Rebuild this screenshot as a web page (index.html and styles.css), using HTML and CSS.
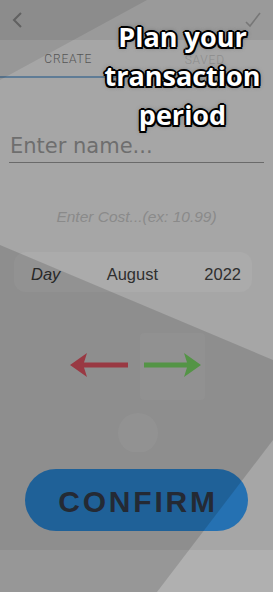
FILE: index.html
```html
<!DOCTYPE html>
<html lang="en">
<head>
  <meta charset="UTF-8">
  <meta name="viewport" content="width=device-width, initial-scale=1.0">
  <title>Plan your transaction period</title>
  <link rel="stylesheet" href="styles.css">
</head>
<body>

  <div id="topbar">
    <svg class="icon" width="14" height="20" viewBox="0 0 14 20">
      <polyline points="10,3 3,10 10,17" fill="none" stroke="#6b6b6b" stroke-width="2"/>
    </svg>
    <svg class="icon" width="20" height="20" viewBox="0 0 20 20">
      <polyline points="3,12 7,16 17,3" fill="none" stroke="#777" stroke-width="1.6"/>
    </svg>
  </div>

  <div id="tabs">
    <div class="tab active">CREATE</div>
    <div class="tab">SAVED</div>
  </div>

  <div id="form">
    <div id="name-field">Enter name...</div>
    <div id="cost-field">Enter Cost...(ex: 10.99)</div>
    <div id="date-row">
      <span class="day">Day</span>
      <span>August</span>
      <span>2022</span>
    </div>

    <svg id="swipe" width="273" height="160" viewBox="0 0 273 160">
      <rect x="140" y="41" width="65" height="67" rx="4" fill="rgba(255,255,255,0.035)"/>
      <circle cx="138" cy="141" r="20" fill="rgba(255,255,255,0.05)"/>
      <!-- red arrow -->
      <polygon points="70,73 87,61 84,70.5 128,70.5 128,75.5 84,75.5 87,85" fill="#b3434f"/>
      <!-- green arrow -->
      <polygon points="201,73 184,61 187,70.5 144,70.5 144,75.5 187,75.5 184,85" fill="#62ad52"/>
    </svg>

    <button id="confirm">CONFIRM</button>
  </div>

  <div id="bottombar"></div>

  <svg id="shapes" width="273" height="592" viewBox="0 0 273 592">
    <polygon points="0,0 147,0 0,80" fill="rgba(0,0,0,0.09)"/>
    <polygon points="0,245 273,360 273,440 157,592 0,592" fill="rgba(0,0,0,0.14)"/>
  </svg>

  <div id="caption">Plan your<br>transaction<br>period</div>

</body>
</html>
```

FILE: styles.css
```css
body {
  margin: 0;
  width: 273px;
  height: 592px;
  position: relative;
  overflow: hidden;
  background-color: #a6a6a6;
  font-family: "Liberation Sans", Arial, sans-serif;
  display: flex;
  flex-direction: column;
}
#topbar {
  height: 40px;
  flex: none;
  background-color: #9a9a9a;
  display: flex;
  align-items: center;
  justify-content: space-between;
  padding: 0 10px 0 11px;
}
.icon { display: block; }
#tabs {
  height: 38px;
  flex: none;
  display: flex;
}
.tab {
  flex: 1;
  display: flex;
  align-items: center;
  justify-content: center;
  font-family: Roboto, sans-serif;
  font-weight: 300;
  font-size: 12px;
  letter-spacing: 0.8px;
  color: #8d8d8d;
  padding-top: 2px;
  box-sizing: border-box;
}
.tab.active {
  color: #555;
  border-bottom: 2px solid #5f7c96;
}
#form {
  flex: 1;
  display: flex;
  flex-direction: column;
}
#name-field {
  margin: 56px 9px 0;
  padding-bottom: 4px;
  border-bottom: 1px solid #6a6a6a;
  font-family: "DejaVu Sans", sans-serif;
  font-size: 21px;
  line-height: 24px;
  color: #6e6e6e;
  padding-left: 1px;
}
#cost-field {
  margin-top: 45px;
  text-align: center;
  font-style: italic;
  font-size: 15.5px;
  line-height: 18px;
  color: #8a8a8a;
}
#date-row {
  margin: 26px 21px 0 14px;
  height: 40px;
  padding: 4px 11px 0 17px;
  box-sizing: border-box;
  background-color: #ababab;
  border-radius: 12px;
  display: flex;
  align-items: center;
  justify-content: space-between;
  font-size: 16.5px;
  line-height: 20px;
  color: #2f2f2f;
}
#date-row .day { font-style: italic; }
#swipe { display: block; }
#confirm {
  margin: 17px 25px 0;
  height: 62px;
  border: none;
  border-radius: 31px;
  background-color: #2571b2;
  color: #2b323d;
  font-family: "Liberation Sans", Arial, sans-serif;
  font-weight: bold;
  font-size: 30px;
  letter-spacing: 2.8px;
  padding: 4px 0 0 3px;
}
#bottombar {
  height: 42px;
  flex: none;
  background-color: #b0b0b0;
}
#shapes {
  position: absolute;
  top: 0;
  left: 0;
  pointer-events: none;
}
#caption {
  position: absolute;
  top: 17px;
  left: 92px;
  right: 0;
  text-align: center;
  font-family: "Open Sans", sans-serif;
  font-weight: bold;
  font-size: 27px;
  line-height: 39px;
  color: #fff;
  text-shadow:
    2px 0 0 #000, -2px 0 0 #000, 0 2px 0 #000, 0 -2px 0 #000,
    1.5px 1.5px 0 #000, -1.5px 1.5px 0 #000, 1.5px -1.5px 0 #000, -1.5px -1.5px 0 #000,
    0 0 5px #444;
}
```
